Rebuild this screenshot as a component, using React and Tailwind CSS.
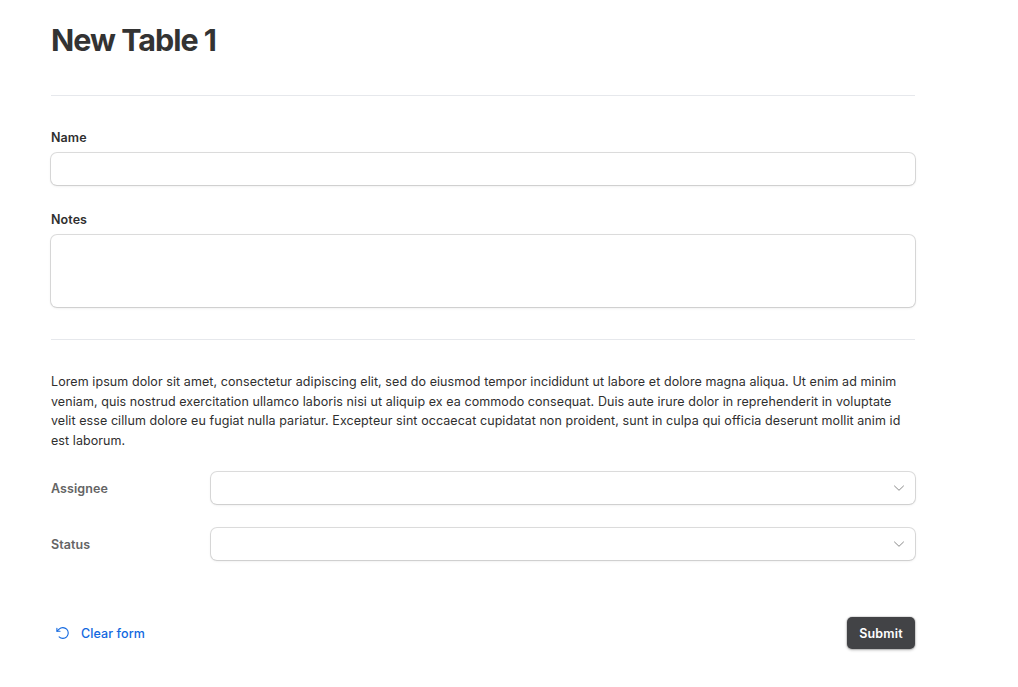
import { useState } from "react";

const FIELD =
  "block w-full rounded-[6px] bg-white px-3 text-[13px] text-[#2f2f2f] outline-none shadow-[0_0_0_1px_rgba(0,0,0,0.13),0_1px_3px_rgba(0,0,0,0.1)]";

const EMPTY = { name: "", notes: "", assignee: "", status: "" };

function SelectRow({ label, className }) {
  return (
    <div className={`flex h-8 items-center ${className}`}>
      <span className="w-40 shrink-0 pt-0.5 font-semibold text-[#646464]">{label}</span>
      <button
        type="button"
        aria-label={label}
        className="flex h-8 grow items-center justify-end rounded-[6px] bg-white pr-[11px] shadow-[0_0_0_1px_rgba(0,0,0,0.13),0_1px_3px_rgba(0,0,0,0.1)]"
      >
        <svg width="11" height="8" viewBox="0 0 11 8" fill="none" stroke="#8a8a8a" strokeWidth="1">
          <path d="M1.5 2 L6 6.3 L10.5 2" strokeLinecap="round" strokeLinejoin="round" />
        </svg>
      </button>
    </div>
  );
}

function App() {
  const [formData, setFormData] = useState(EMPTY);

  const handleChange = (e) => {
    setFormData((prev) => ({
      ...prev,
      [e.target.name]: e.target.value,
    }));
  };

  return (
    <div className="min-h-screen bg-white pl-[51px] pt-5 font-['Inter',sans-serif] text-[12.5px] leading-[19.5px] tracking-[0.08px] text-[#2f2f2f]">
      <form className="w-[864px]" onSubmit={(e) => e.preventDefault()}>
        <h1 className="text-[30.5px] font-bold leading-10 tracking-[-1px] text-[#333333]">
          New Table 1
        </h1>

        <hr className="mt-[35px] border-[#e6e8ec]" />

        <label htmlFor="name" className="mt-8 block h-[25px] font-semibold">
          Name
        </label>
        <input
          id="name"
          name="name"
          type="text"
          value={formData.name}
          onChange={handleChange}
          className={`h-8 ${FIELD}`}
        />

        <label htmlFor="notes" className="mt-[25px] block h-[25px] font-semibold">
          Notes
        </label>
        <textarea
          id="notes"
          name="notes"
          value={formData.notes}
          onChange={handleChange}
          className={`h-[72px] resize-none py-2 ${FIELD}`}
        />

        <hr className="mt-8 border-[#e6e8ec]" />

        <p className="mt-8">
          Lorem ipsum dolor sit amet, consectetur adipiscing elit, sed do eiusmod tempor incididunt ut labore et dolore magna aliqua. Ut enim ad minim veniam, quis nostrud exercitation ullamco laboris nisi ut aliquip ex ea commodo consequat. Duis aute irure dolor in reprehenderit in voluptate velit esse cillum dolore eu fugiat nulla pariatur. Excepteur sint occaecat cupidatat non proident, sunt in culpa qui officia deserunt mollit anim id est laborum.
        </p>

        <SelectRow label="Assignee" className="mt-[22px]" />
        <SelectRow label="Status" className="mt-6" />

        <div className="mt-[57px] flex h-8 items-center justify-between">
          <button
            type="button"
            onClick={() => setFormData(EMPTY)}
            className="flex items-center gap-[11px] pl-[5px] font-medium text-[#1268e0]"
          >
            <svg width="14" height="14" viewBox="0 0 14 14" fill="none" stroke="currentColor" strokeWidth="1.1" strokeLinecap="round" strokeLinejoin="round">
              <path d="M0.9 2.3 V5.3 H4" />
              <path d="M1.1 5.1 L3.1 3.1 A5.4 5.4 0 1 1 3.1 10.9" />
            </svg>
            <span className="pt-0.5">Clear form</span>
          </button>
          <button
            type="submit"
            className="h-8 w-[68px] rounded-[5px] bg-[#424346] pt-0.5 font-semibold tracking-[0.15px] text-white shadow-[0_0_0_1px_rgba(0,0,0,0.08),0_1px_3px_rgba(0,0,0,0.3)]"
          >
            Submit
          </button>
        </div>
      </form>
    </div>
  );
}

export default App;
